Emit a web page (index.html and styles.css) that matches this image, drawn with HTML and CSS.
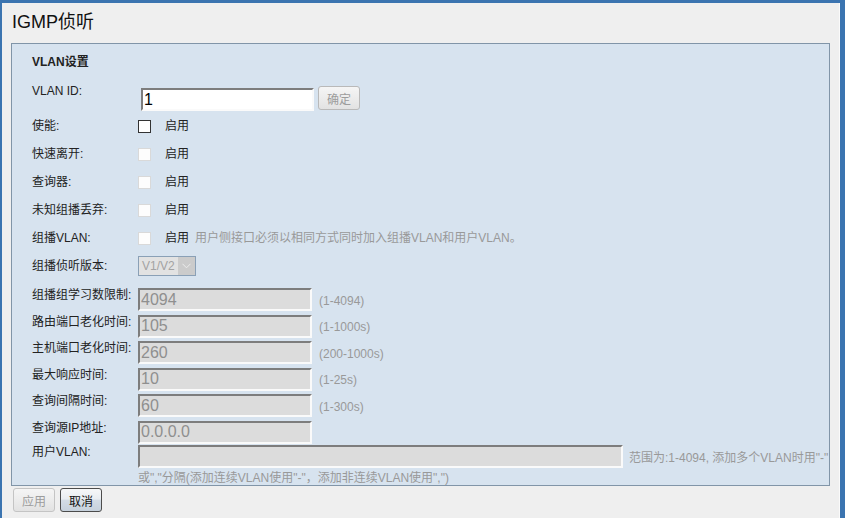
FILE: index.html
```html
<!DOCTYPE html>
<html lang="zh-CN">
<head>
    <meta charset="UTF-8">
    <title>IGMP侦听</title>
    <link rel="stylesheet" href="styles.css">
</head>
<body>
    <h1 class="title">IGMP侦听</h1>
    <div class="panel">
        <div class="panel-title">VLAN设置</div>
        <div class="row row-vlan">
            <span class="lbl">VLAN ID:</span>
            <div class="ctl">
                <input class="txt txt-id" type="text" value="1">
                <button class="btn btn-off btn-ok" disabled>确定</button>
            </div>
        </div>
        <div class="row row-check">
            <span class="lbl">使能:</span>
            <div class="ctl"><input class="chk" type="checkbox"><span class="chk-text">启用</span></div>
        </div>
        <div class="row row-check">
            <span class="lbl">快速离开:</span>
            <div class="ctl"><input class="chk" type="checkbox" disabled><span class="chk-text">启用</span></div>
        </div>
        <div class="row row-check">
            <span class="lbl">查询器:</span>
            <div class="ctl"><input class="chk" type="checkbox" disabled><span class="chk-text">启用</span></div>
        </div>
        <div class="row row-check">
            <span class="lbl">未知组播丢弃:</span>
            <div class="ctl"><input class="chk" type="checkbox" disabled><span class="chk-text">启用</span></div>
        </div>
        <div class="row row-check">
            <span class="lbl">组播VLAN:</span>
            <div class="ctl"><input class="chk" type="checkbox" disabled><span class="chk-text">启用</span><span class="hint hint-mvlan">用户侧接口必须以相同方式同时加入组播VLAN和用户VLAN。</span></div>
        </div>
        <div class="row row-select">
            <span class="lbl">组播侦听版本:</span>
            <div class="ctl">
                <div class="sel">
                    <span class="sel-text">V1/V2</span>
                    <span class="sel-arrow">
                        <svg width="9" height="6" viewBox="0 0 9 6"><path d="M0.5 0.8 L4.5 4.8 L8.5 0.8" fill="none" stroke="#ececec" stroke-width="1"/></svg>
                    </span>
                </div>
            </div>
        </div>
        <div class="row row-input first">
            <span class="lbl">组播组学习数限制:</span>
            <div class="ctl"><input class="txt" type="text" value="4094" disabled><span class="hint">(1-4094)</span></div>
        </div>
        <div class="row row-input">
            <span class="lbl">路由端口老化时间:</span>
            <div class="ctl"><input class="txt" type="text" value="105" disabled><span class="hint">(1-1000s)</span></div>
        </div>
        <div class="row row-input">
            <span class="lbl">主机端口老化时间:</span>
            <div class="ctl"><input class="txt" type="text" value="260" disabled><span class="hint">(200-1000s)</span></div>
        </div>
        <div class="row row-input">
            <span class="lbl">最大响应时间:</span>
            <div class="ctl"><input class="txt" type="text" value="10" disabled><span class="hint">(1-25s)</span></div>
        </div>
        <div class="row row-input">
            <span class="lbl">查询间隔时间:</span>
            <div class="ctl"><input class="txt" type="text" value="60" disabled><span class="hint">(1-300s)</span></div>
        </div>
        <div class="row row-input row-ip">
            <span class="lbl">查询源IP地址:</span>
            <div class="ctl"><input class="txt" type="text" value="0.0.0.0" disabled></div>
        </div>
        <div class="row row-user">
            <span class="lbl">用户VLAN:</span>
            <div class="ctl">
                <input class="txt txt-wide" type="text" disabled><span class="hint range">范围为:1-4094, 添加多个VLAN时用"-"</span>
                <div class="hint range-more">或","分隔(添加连续VLAN使用"-"，添加非连续VLAN使用",")</div>
            </div>
        </div>
    </div>
    <div class="actions">
        <button class="btn btn-off" disabled>应用</button>
        <button class="btn btn-cancel">取消</button>
    </div>
</body>
</html>
```

FILE: styles.css
```css
* {
    box-sizing: border-box;
}
html, body {
    margin: 0;
    height: 100%;
}
body {
    background: #efefef;
    font-family: "Liberation Sans", "Noto Sans CJK SC", sans-serif;
    font-size: 12px;
    color: #222;
    border-top: 3px solid #3b74b0;
    border-left: 2px solid #3b74b0;
    border-right: 5px solid #3b74b0;
    box-shadow: inset -1px 0 0 #fafafa;
    overflow: hidden;
}
.title {
    margin: 8px 0 0 10px;
    font-size: 18px;
    font-weight: normal;
    line-height: 22px;
    color: #111;
}
.panel {
    margin: 10px 10px 0 9px;
    border: 1px solid #8195a8;
    background: #d7e3ef;
    padding-left: 20px;
}
.panel-title {
    padding-top: 11px;
    font-weight: bold;
    line-height: 14px;
}
.row {
    display: flex;
}
.lbl {
    width: 106px;
    flex: none;
    line-height: 14px;
}
.ctl {
    line-height: 14px;
}
.row-vlan {
    margin-top: 15px;
    height: 28px;
}
.row-vlan .ctl {
    display: flex;
    align-items: flex-start;
}
.row-check, .row-select {
    height: 28px;
    align-items: center;
}
.row-check .ctl {
    display: flex;
    align-items: center;
}
.chk {
    appearance: none;
    -webkit-appearance: none;
    margin: 0;
    width: 13px;
    height: 13px;
    border: 1px solid #333;
    background: #fff;
}
.chk:disabled {
    border-color: #d9d9d9;
    background: #fdfdfd;
}
.chk-text {
    margin-left: 14px;
}
.hint {
    color: #999;
    margin-left: 7px;
}
.hint-mvlan {
    margin-left: 6px;
}
.txt {
    width: 174px;
    height: 23px;
    margin: 0;
    padding: 0 1px;
    border-style: solid;
    border-width: 2px;
    border-color: #7d7d7d #fafafa #fafafa #7d7d7d;
    background: #dcdcdc;
    color: #8f8f8f;
    font: 16px "Liberation Sans", sans-serif;
    outline: none;
    vertical-align: baseline;
}
.txt-id {
    margin: 4px 0 0 3px;
    width: 173px;
    background: #fff;
    color: #000;
}
.txt-wide {
    width: 485px;
}
.row-input {
    height: 26.5px;
    align-items: flex-start;
}
.row-input.first {
    margin-top: 8px;
}
.row-ip {
    height: 24.5px;
}
.row-user .ctl {
    flex: 1;
}
.range {
    margin-left: 6px;
    white-space: nowrap;
}
.range-more {
    margin-left: 0;
    padding-top: 3px;
}
.sel {
    display: flex;
    width: 58px;
    height: 20px;
    border: 1px solid #8aa0b6;
    background: #e2e2e2;
}
.sel-text {
    flex: 1;
    padding-left: 3px;
    line-height: 18px;
    color: #a3a3a3;
}
.sel-arrow {
    width: 17px;
    background: #cbcbcb;
    display: flex;
    align-items: center;
    justify-content: center;
}
.btn {
    width: 42px;
    height: 24px;
    padding: 0;
    border-radius: 3px;
    font: 12px "Liberation Sans", "Noto Sans CJK SC", sans-serif;
}
.btn-off {
    border: 1px solid #c4c4c4;
    background: linear-gradient(#f5f5f5 0%, #ececec 50%, #e2e2e2 100%);
    color: #9c9c9c;
}
.btn-ok {
    margin: 2px 0 0 4px;
    border-color: #b9b9b9;
}
.btn-cancel {
    border: 1px solid #4c4c4c;
    background: linear-gradient(#f6f7f8 0%, #e9edf1 45%, #d3dce5 52%, #c6d1dc 100%);
    color: #111;
}
.actions {
    display: flex;
    gap: 5px;
    margin: 2px 0 0 11px;
}
```
